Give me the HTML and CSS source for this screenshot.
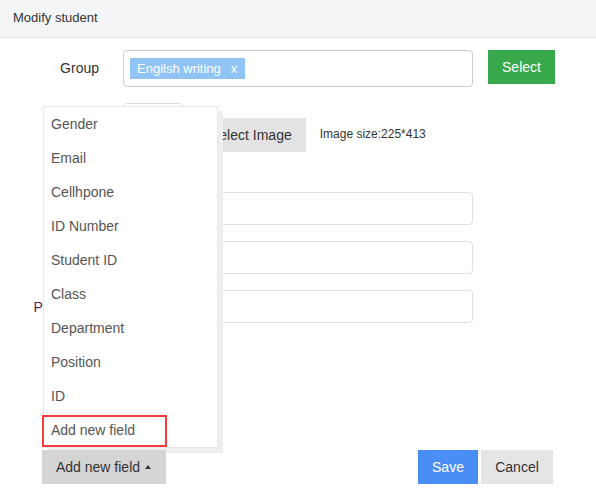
FILE: index.html
```html
<!DOCTYPE html>
<html>
<head>
<meta charset="utf-8">
<link rel="stylesheet" href="styles.css">
</head>
<body>
<div class="dialog">
  <div class="topbar">Modify student</div>
  <div class="form">
    <div class="row row-group">
      <label class="lbl">Group</label>
      <div class="tagbox"><span class="tag">Engilsh writing<span class="tag-x">x</span></span></div>
      <button class="btn btn-green">Select</button>
    </div>
    <div class="row row-image">
      <span class="lbl"></span>
      <div class="preview"></div>
      <button class="btn btn-gray">Select Image</button>
      <span class="hint">Image size:225*413</span>
    </div>
    <div class="row row-field first">
      <label class="lbl"></label>
      <input class="field" type="text">
    </div>
    <div class="row row-field">
      <label class="lbl"></label>
      <input class="field" type="text">
    </div>
    <div class="row row-field">
      <label class="lbl lbl-pw">Password</label>
      <input class="field" type="text">
    </div>
  </div>
  <div class="footer">
    <div class="addwrap">
      <button class="btn btn-add">Add new field<span class="caret"></span></button>
      <ul class="menu">
        <li>Gender</li>
        <li>Email</li>
        <li>Cellhpone</li>
        <li>ID Number</li>
        <li>Student ID</li>
        <li>Class</li>
        <li>Department</li>
        <li>Position</li>
        <li>ID</li>
        <li class="hl">Add new field</li>
      </ul>
    </div>
    <div class="actions">
      <button class="btn btn-blue">Save</button>
      <button class="btn btn-light">Cancel</button>
    </div>
  </div>
</div>
</body>
</html>
```
FILE: styles.css
```css
*, *::before, *::after { box-sizing: border-box; }
html, body { margin: 0; padding: 0; background: #fff; }
body {
  font-family: "Liberation Sans", Arial, sans-serif;
  font-size: 14px;
  color: #333;
  width: 596px;
  height: 492px;
  overflow: hidden;
}
.topbar {
  height: 38px;
  background: #f4f5f7;
  border-bottom: 1px solid #e2e2e2;
  padding-left: 13px;
  font-size: 13px;
  line-height: 36px;
  color: #333;
}
.form { padding-top: 12px; }
.row { display: flex; }
.lbl {
  width: 99px;
  flex: none;
  text-align: right;
  margin-right: 24px;
  color: #333;
}
.row-group { align-items: flex-start; }
.row-group .lbl { line-height: 37px; }
.tagbox {
  width: 350px;
  height: 37px;
  border: 1px solid #ccc;
  border-radius: 4px;
  padding: 7px 0 0 6px;
}
.tag {
  display: inline-flex;
  align-items: center;
  height: 21px;
  background: #8fc4f5;
  color: #fff;
  font-size: 13px;
  padding: 0 8px 0 7px;
}
.tag-x { margin-left: 10px; }
.btn {
  font-family: inherit;
  font-size: 14px;
  border: none;
  border-radius: 0;
  height: 34px;
  padding: 0 14px;
  cursor: pointer;
  white-space: nowrap;
}
.btn-green {
  margin-left: 15px;
  width: 67px;
  padding: 0;
  background: #37a94b;
  color: #fff;
}
.row-image { margin-top: 16px; align-items: flex-end; }
.preview {
  width: 60px;
  height: 49px;
  border: 1px solid #ddd;
  border-radius: 4px;
}
.btn-gray {
  margin-left: 13px;
  background: #e3e3e3;
  color: #333;
}
.hint {
  margin-left: 14px;
  font-size: 12px;
  padding-bottom: 4px;
  line-height: 28px;
}
.row-field { align-items: center; margin-top: 16px; }
.row-field.first { margin-top: 40px; }
.field {
  width: 350px;
  height: 33px;
  border: 1px solid #e0e0e0;
  border-radius: 4px;
  padding: 0 8px;
  font-family: inherit;
}
.lbl-pw { color: #5b1f48; padding-right: 4px; }
.footer {
  display: flex;
  justify-content: space-between;
  align-items: flex-start;
  margin-top: 127px;
  padding: 0 43px 0 42px;
}
.addwrap { position: relative; }
.btn-add {
  position: relative;
  z-index: 3;
  width: 124px;
  padding: 0 0 0 14px;
  background: #d4d4d4;
  color: #333;
  display: flex;
  align-items: center;
}
.caret {
  display: inline-block;
  margin-left: 5px;
  width: 0;
  height: 0;
  border-left: 3.5px solid transparent;
  border-right: 3.5px solid transparent;
  border-bottom: 4px solid #333;
  margin-top: -1px;
}
.menu {
  position: absolute;
  z-index: 2;
  left: 1px;
  bottom: 36px;
  width: 175px;
  margin: 0;
  padding: 0;
  list-style: none;
  background: #fff;
  border: 1px solid #e8e8e8;
  box-shadow: 5px 5px 0 #eeeeee;
}
.menu li {
  height: 34px;
  line-height: 34px;
  padding-left: 7px;
  color: #555;
}
.menu li.hl { position: relative; }
.menu li.hl::after {
  content: "";
  position: absolute;
  left: -2px;
  top: 2px;
  width: 125px;
  height: 32px;
  border: 2px solid #f33b3e;
}
.actions { display: flex; gap: 3px; }
.btn-blue { width: 60px; padding: 0; background: #4a8ef5; color: #fff; }
.btn-light { width: 72px; padding: 0; background: #e5e5e5; color: #333; }
```
